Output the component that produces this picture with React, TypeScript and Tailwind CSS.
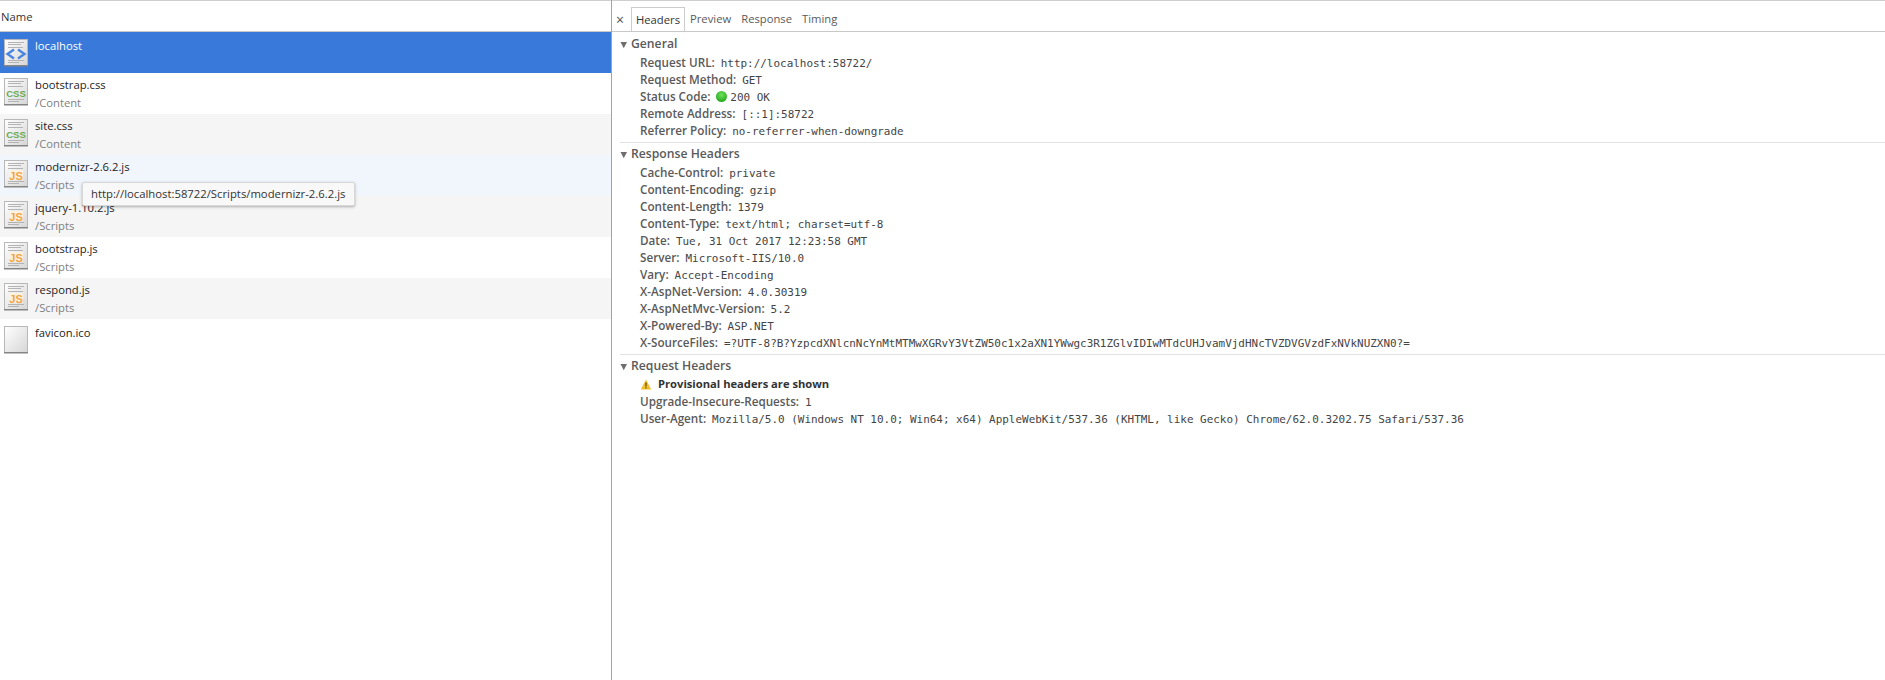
import type { ReactNode } from "react";

const sans = "font-['Open_Sans','Noto_Sans',sans-serif]";

function FileIcon({ kind }: { kind: "html" | "css" | "js" | "blank" }) {
  const lines = kind !== "blank";
  return (
    <svg width="24" height="28" viewBox="0 0 24 28" className="shrink-0">
      <defs>
        <linearGradient id={`pg-${kind}`} x1="0" y1="0" x2="1" y2="1">
          <stop offset="0" stopColor="#ffffff" />
          <stop offset="1" stopColor="#d6d6d6" />
        </linearGradient>
      </defs>
      <rect x="0.5" y="0.5" width="23" height="26" fill={`url(#pg-${kind})`} stroke="#b8b8b8" />
      <rect x="0" y="26" width="24" height="1.5" fill="#858585" />
      {lines && (
        <g stroke="#b4b4b4" strokeWidth="1">
          <path d="M4 3.5h16M4 5.5h13M4 8.5h15" />
          <path d="M4 21.5h16M4 23.5h11" />
        </g>
      )}
      {kind === "html" && (
        <g fill="none" stroke="#4a86e0" strokeWidth="2.4">
          <path d="M10 10.5 3.5 15l6.5 4.5" />
          <path d="M14 10.5l6.5 4.5-6.5 4.5" />
        </g>
      )}
      {kind === "css" && (
        <text x="12" y="19" textAnchor="middle" fontSize="9.5" fontWeight="700" fill="#6aab4e" fontFamily="Liberation Sans, sans-serif">CSS</text>
      )}
      {kind === "js" && (
        <>
          <rect x="5" y="10" width="14" height="10" fill="#fdf1df" />
          <text x="12" y="19.5" textAnchor="middle" fontSize="11" fontWeight="700" fill="#efa64a" fontFamily="Liberation Sans, sans-serif">JS</text>
        </>
      )}
    </svg>
  );
}

type Req = { name: string; path?: string; kind: "html" | "css" | "js" | "blank"; bg: string; selected?: boolean };
const reqs: Req[] = [
  { name: "localhost", kind: "html", bg: "bg-[#3879d9]", selected: true },
  { name: "bootstrap.css", path: "/Content", kind: "css", bg: "bg-white" },
  { name: "site.css", path: "/Content", kind: "css", bg: "bg-[#f5f5f5]" },
  { name: "modernizr-2.6.2.js", path: "/Scripts", kind: "js", bg: "bg-[#f1f6fd]" },
  { name: "jquery-1.10.2.js", path: "/Scripts", kind: "js", bg: "bg-[#f5f5f5]" },
  { name: "bootstrap.js", path: "/Scripts", kind: "js", bg: "bg-white" },
  { name: "respond.js", path: "/Scripts", kind: "js", bg: "bg-[#f5f5f5]" },
  { name: "favicon.ico", kind: "blank", bg: "bg-white" },
];

function Row({ r }: { r: Req }) {
  return (
    <div className={`flex h-[41px] pl-[4px] gap-[7px] ${r.path ? "pt-[5px]" : "pt-[7px]"} ${r.bg}`}>
      <FileIcon kind={r.kind} />
      <div className="flex flex-col -mt-[2px]">
        <span className={`text-[11.25px] leading-[18px] ${r.selected ? "text-white" : "text-[#222]"}`}>{r.name}</span>
        {r.path && <span className="text-[11.25px] leading-[18px] text-[#808080]">{r.path}</span>}
      </div>
    </div>
  );
}

function Caret() {
  return (
    <svg width="8" height="8" viewBox="0 0 8 8" className="mr-[3px] shrink-0">
      <path d="M0.5 1h6.5L3.75 7.2z" fill="#6e6e6e" />
    </svg>
  );
}

function Section({ title, children, border }: { title: string; children: ReactNode; border?: boolean }) {
  return (
    <div className={`ml-[8px] pb-[3px] ${border ? "border-b border-[#e2e2e2]" : ""}`}>
      <div className="flex items-center h-[17px] mt-[3px] text-[12.2px] font-semibold text-[#5a5a5a]">
        <Caret />
        {title}
      </div>
      <div className="pl-[20px] pt-px">{children}</div>
    </div>
  );
}

function H({ k, v, children }: { k: string; v: string; children?: ReactNode }) {
  return (
    <div className="flex items-baseline h-[17px] leading-[17px] whitespace-nowrap">
      <span className="text-[11.7px] font-semibold text-[#5a5a5a] mr-[6px]">{k}:</span>
      {children && <span className="self-center flex">{children}</span>}
      <span className="font-['DejaVu_Sans_Mono',monospace] text-[10.96px] text-[#444]">{v}</span>
    </div>
  );
}

function Tab({ children, className }: { children: ReactNode; className: string }) {
  return <span className={`h-[24px] pt-px flex items-center ${className}`}>{children}</span>;
}

export default function App() {
  return (
    <div className={`relative flex w-[1885px] h-[680px] overflow-hidden bg-white ${sans}`}>
      <div className="w-[611px] shrink-0 flex flex-col border-t border-[#cfcfcf]">
        <div className="h-[31px] flex items-center pl-px pt-[2px] text-[11.25px] text-[#333] border-b border-[#c8c8c8]">Name</div>
        {reqs.map((r) => (
          <Row key={r.name} r={r} />
        ))}
      </div>
      <div className="w-px shrink-0 bg-[#a3a3a3]" />
      <div className="flex-1 flex flex-col border-t border-[#cfcfcf]">
        <div className="h-[31px] flex items-end pl-[4px] text-[11.25px] text-[#5a5a5a] border-b border-[#c8c8c8]">
          <Tab className="w-[15px] text-[14px] text-[#555]">×</Tab>
          <Tab className="w-[54px] justify-center border border-b-0 border-[#ccc] text-[#333] bg-white">Headers</Tab>
          <Tab className="ml-[5px]">Preview</Tab>
          <Tab className="ml-[10px]">Response</Tab>
          <Tab className="ml-[10px]">Timing</Tab>
        </div>
        <div className="pt-px">
          <Section title="General" border>
            <H k="Request URL" v="http://localhost:58722/" />
            <H k="Request Method" v="GET" />
            <H k="Status Code" v="200 OK">
              <span className="w-[11px] h-[11px] rounded-full bg-[radial-gradient(circle_at_50%_35%,#6fe05a,#0f9a0f)] mr-[3px]" />
            </H>
            <H k="Remote Address" v="[::1]:58722" />
            <H k="Referrer Policy" v="no-referrer-when-downgrade" />
          </Section>
          <Section title="Response Headers" border>
            <H k="Cache-Control" v="private" />
            <H k="Content-Encoding" v="gzip" />
            <H k="Content-Length" v="1379" />
            <H k="Content-Type" v="text/html; charset=utf-8" />
            <H k="Date" v="Tue, 31 Oct 2017 12:23:58 GMT" />
            <H k="Server" v="Microsoft-IIS/10.0" />
            <H k="Vary" v="Accept-Encoding" />
            <H k="X-AspNet-Version" v="4.0.30319" />
            <H k="X-AspNetMvc-Version" v="5.2" />
            <H k="X-Powered-By" v="ASP.NET" />
            <H k="X-SourceFiles" v="=?UTF-8?B?YzpcdXNlcnNcYnMtMTMwXGRvY3VtZW50c1x2aXN1YWwgc3R1ZGlvIDIwMTdcUHJvamVjdHNcTVZDVGVzdFxNVkNUZXN0?=" />
          </Section>
          <Section title="Request Headers">
            <div className="flex items-center h-[17px] text-[11.2px] font-bold text-[#333]">
              <svg width="12" height="11" viewBox="0 0 12 11" className="mr-[6px]">
                <path d="M6 0.5 11.2 10.5H0.8z" fill="#f0bf2a" />
                <path d="M5.4 3.5h1.2v4H5.4zM5.4 8.2h1.2v1.2H5.4z" fill="#5a4a10" />
              </svg>
              Provisional headers are shown
            </div>
            <H k="Upgrade-Insecure-Requests" v="1" />
            <H k="User-Agent" v="Mozilla/5.0 (Windows NT 10.0; Win64; x64) AppleWebKit/537.36 (KHTML, like Gecko) Chrome/62.0.3202.75 Safari/537.36" />
          </Section>
        </div>
      </div>
      <div className="absolute left-[82px] top-[182px] h-[24px] pl-[8px] pr-[9px] flex items-center text-[11.3px] text-[#333] bg-[#f8f8f8] border border-[#d8d8d8] rounded-[2px] shadow-[0_1px_3px_rgba(0,0,0,0.3)]">
        http://localhost:58722/Scripts/modernizr-2.6.2.js
      </div>
    </div>
  );
}
